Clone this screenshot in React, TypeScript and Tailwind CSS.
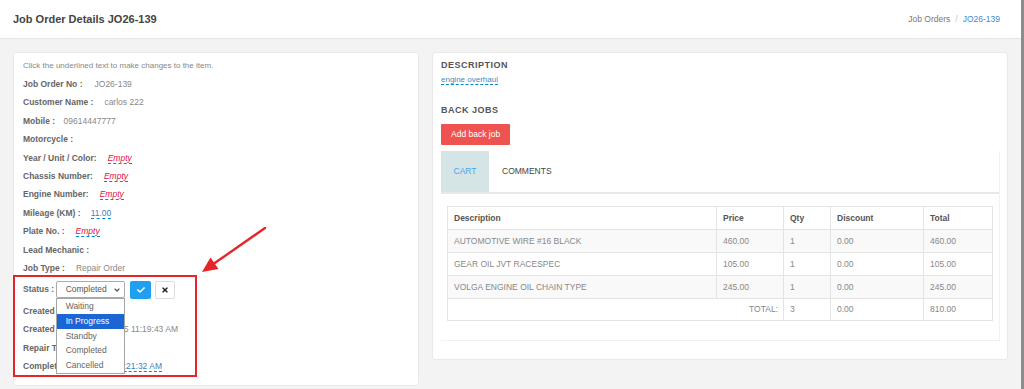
import React from "react";
import { FaCheck, FaTimes } from "react-icons/fa";

function Editable({ children, empty }: { children: React.ReactNode; empty?: boolean }) {
  return (
    <span
      className={
        "border-b border-dashed border-[#0088cc] " +
        (empty ? "italic text-[#dd1144]" : "text-[#3a7fc2]")
      }
    >
      {children}
    </span>
  );
}

function Row({
  label,
  children,
  gap = "ml-[11px]",
}: {
  label: string;
  children?: React.ReactNode;
  gap?: string;
}) {
  return (
    <div className="h-[18.45px] flex items-center text-[8.5px] whitespace-nowrap">
      <span className="font-bold text-[#666]">{label}</span>
      {children ? <span className={gap}>{children}</span> : null}
    </div>
  );
}

/* a row partly covered by the open select list */
function CoveredRow({
  label,
  value,
  valueWidth,
}: {
  label: string;
  value?: React.ReactNode;
  valueWidth?: string;
}) {
  return (
    <div className="h-[18.45px] flex items-center text-[8.5px] whitespace-nowrap">
      <div className="w-[33px] shrink-0 overflow-hidden font-bold text-[#666]">{label}</div>
      <div className="w-[69px] shrink-0" />
      {value ? (
        <div className={"shrink-0 overflow-hidden flex justify-end " + (valueWidth ?? "")}>
          <span className="shrink-0">{value}</span>
        </div>
      ) : null}
    </div>
  );
}

const items = [
  { d: "AUTOMOTIVE WIRE #16 BLACK", p: "460.00", q: "1", di: "0.00", t: "460.00" },
  { d: "GEAR OIL JVT RACESPEC", p: "105.00", q: "1", di: "0.00", t: "105.00" },
  { d: "VOLGA ENGINE OIL CHAIN TYPE", p: "245.00", q: "1", di: "0.00", t: "245.00" },
];

export default function App() {
  const cell = "border border-[#e4e4e4] px-[6px] text-left align-middle";
  return (
    <div className="flex w-[1024px] h-[389px] overflow-hidden font-['Liberation_Sans',Arial,sans-serif]">
      <div className="relative flex-1 flex flex-col bg-[#f3f3f3]">
        {/* header */}
        <div className="h-[39px] shrink-0 bg-white border-b border-[#e6e6e6] flex items-center justify-between pl-[13px] pr-[21px]">
          <div className="text-[11px] font-bold text-[#444]">Job Order Details JO26-139</div>
          <div className="text-[8.5px] flex items-center">
            <span className="text-[#777]">Job Orders</span>
            <span className="px-[5px] text-[#c4c4c4]">/</span>
            <span className="text-[#3f8ad6]">JO26-139</span>
          </div>
        </div>

        {/* content */}
        <div className="flex items-start gap-[13px] px-[13px] pt-[13px]">
          {/* left card */}
          <div className="w-[406px] h-[334px] shrink-0 bg-white border border-[#e9e9e9] rounded-[3px] px-[9px] pt-[6px]">
            <div className="h-[14px] leading-[14px] text-[8px] text-[#888]">
              Click the underlined text to make changes to the item.
            </div>
            <div className="mt-[2px]">
              <Row label="Job Order No :" gap="ml-[12px]">
                <span className="text-[#888]">JO26-139</span>
              </Row>
              <Row label="Customer Name :">
                <span className="text-[#888]">carlos 222</span>
              </Row>
              <Row label="Mobile :" gap="ml-[8.5px]">
                <span className="text-[#888]">09614447777</span>
              </Row>
              <Row label="Motorcycle :" />
              <Row label="Year / Unit / Color:">
                <Editable empty>Empty</Editable>
              </Row>
              <Row label="Chassis Number:">
                <Editable empty>Empty</Editable>
              </Row>
              <Row label="Engine Number:">
                <Editable empty>Empty</Editable>
              </Row>
              <Row label="Mileage (KM) :" gap="ml-[10px]">
                <Editable>11.00</Editable>
              </Row>
              <Row label="Plate No. :">
                <Editable empty>Empty</Editable>
              </Row>
              <Row label="Lead Mechanic :" />
              <Row label="Job Type :">
                <span className="text-[#888]">Repair Order</span>
              </Row>

              {/* status row */}
              <div className="h-[24px] flex items-center text-[8.5px] whitespace-nowrap">
                <span className="font-bold text-[#666]">Status :</span>
                <div className="relative ml-[2px]">
                  <div className="relative w-[69px] h-[17px] border border-[#aaa] rounded-[2px] bg-white flex items-center pl-[8.5px] text-[#555]">
                    Completed
                    <svg
                      className="absolute right-[4px] top-[6px]"
                      width="6"
                      height="4"
                      viewBox="0 0 6 4"
                    >
                      <path d="M0.6 0.6 L3 3 L5.4 0.6" fill="none" stroke="#555" strokeWidth="1.3" />
                    </svg>
                  </div>
                  <div className="absolute left-0 top-[17px] z-20 w-[69px] bg-white border border-[#a5a5a5] text-[8.5px]">
                    {["Waiting", "In Progress", "Standby", "Completed", "Cancelled"].map((o) => (
                      <div
                        key={o}
                        className={
                          "h-[14.7px] leading-[14.7px] pl-[8.5px] " +
                          (o === "In Progress" ? "bg-[#1c65d4] text-white" : "text-[#666]")
                        }
                      >
                        {o}
                      </div>
                    ))}
                  </div>
                </div>
                <div className="ml-[5px] w-[21px] h-[18px] bg-[#1e9ff2] rounded-[2px] flex items-center justify-center">
                  <FaCheck size={8} color="#fff" />
                </div>
                <div className="ml-[4px] w-[20px] h-[18px] bg-white border border-[#dcdcdc] rounded-[2px] flex items-center justify-center">
                  <FaTimes size={8} color="#222" />
                </div>
              </div>

              <CoveredRow label="Created By :" />
              <CoveredRow
                label="Created At :"
                valueWidth="w-[53px]"
                value={<span className="text-[#888]">2026-01-05 11:19:43 AM</span>}
              />
              <CoveredRow label="Repair Type :" />
              <CoveredRow
                label="Completed At :"
                valueWidth="w-[37px]"
                value={<Editable>2026-01-06 10:21:32 AM</Editable>}
              />
            </div>
          </div>

          {/* right card */}
          <div className="flex-1 h-[308px] bg-white border border-[#e9e9e9] rounded-[3px] pl-[8px] pr-[7px] pt-[6px]">
            <div className="text-[9px] leading-[12px] font-bold tracking-[0.5px] text-[#555]">DESCRIPTION</div>
            <div className="mt-[3px] leading-[12px] text-[8px]">
              <span className="text-[#3c8dbc] border-b border-dashed border-[#0088cc]">engine overhaul</span>
            </div>
            <div className="mt-[18px] text-[9px] leading-[12px] font-bold tracking-[0.5px] text-[#555]">BACK JOBS</div>
            <div className="mt-[8px] inline-flex h-[21px] items-center px-[10px] bg-[#ef5350] text-white text-[8.5px] rounded-[1px]">
              Add back job
            </div>
            <div className="mt-[6px] border-r border-b border-[#f1f1f1]">
              <div className="flex border-b-2 border-[#e8e8e8] text-[8.5px]">
                <div className="h-[41px] px-[12.5px] flex items-center bg-[#d5e4e4] text-[#45a7ec]">CART</div>
                <div className="h-[41px] px-[13px] flex items-center text-[#444]">COMMENTS</div>
              </div>
              <div className="pt-[12px] px-[6px] pb-[19px]">
                <table className="w-full border-collapse border border-[#e4e4e4] table-fixed text-[8.5px]">
                  <colgroup>
                    <col className="w-[269px]" />
                    <col className="w-[67px]" />
                    <col className="w-[47px]" />
                    <col className="w-[93px]" />
                    <col className="w-[69px]" />
                  </colgroup>
                  <thead>
                    <tr className="h-[23px] bg-white">
                      {["Description", "Price", "Qty", "Discount", "Total"].map((h) => (
                        <th key={h} className={cell + " font-bold text-[#555]"}>
                          {h}
                        </th>
                      ))}
                    </tr>
                  </thead>
                  <tbody>
                    {items.map((it, i) => (
                      <tr key={it.d} className={"h-[23px] " + (i % 2 === 0 ? "bg-[#f9f9f9]" : "bg-white")}>
                        <td className={cell + " text-[#888]"}>{it.d}</td>
                        <td className={cell + " text-[#888]"}>{it.p}</td>
                        <td className={cell + " text-[#888]"}>{it.q}</td>
                        <td className={cell + " text-[#888]"}>{it.di}</td>
                        <td className={cell + " text-[#888]"}>{it.t}</td>
                      </tr>
                    ))}
                    <tr className="h-[22px] bg-white">
                      <td colSpan={2} className="border border-[#e4e4e4] pr-[5px] text-right text-[#888]">
                        TOTAL:
                      </td>
                      <td className={cell + " text-[#888]"}>3</td>
                      <td className={cell + " text-[#888]"}>0.00</td>
                      <td className={cell + " text-[#888]"}>810.00</td>
                    </tr>
                  </tbody>
                </table>
              </div>
            </div>
          </div>
        </div>

        {/* annotation: red box */}
        <div className="absolute left-[13px] top-[275px] w-[184px] h-[102px] border-2 border-[#e4262b] z-30 pointer-events-none" />
        {/* annotation: arrow */}
        <svg
          className="absolute left-[195px] top-[222px] z-30 pointer-events-none"
          width="78"
          height="56"
          viewBox="0 0 78 56"
        >
          <line x1="70" y1="6" x2="19" y2="41.6" stroke="#e4262b" strokeWidth="2.4" strokeLinecap="round" />
          <polygon points="7,50 23.5,47 15.5,35.6" fill="#e4262b" />
        </svg>
      </div>
      <div className="w-[5px] h-full bg-[#8d8d8d]" />
    </div>
  );
}
